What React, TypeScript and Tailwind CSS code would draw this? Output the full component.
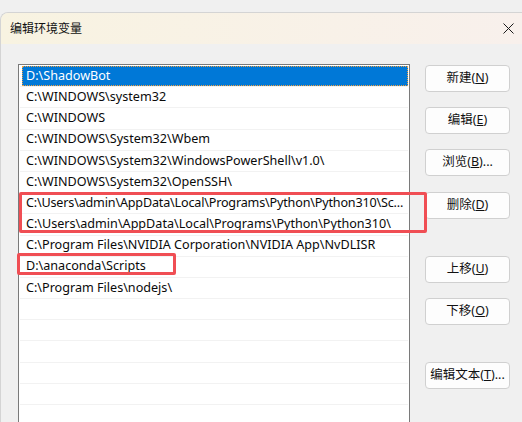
import React from "react";

const entries = [
  "D:\\ShadowBot",
  "C:\\WINDOWS\\system32",
  "C:\\WINDOWS",
  "C:\\WINDOWS\\System32\\Wbem",
  "C:\\WINDOWS\\System32\\WindowsPowerShell\\v1.0\\",
  "C:\\WINDOWS\\System32\\OpenSSH\\",
  "C:\\Users\\admin\\AppData\\Local\\Programs\\Python\\Python310\\Sc...",
  "C:\\Users\\admin\\AppData\\Local\\Programs\\Python\\Python310\\",
  "C:\\Program Files\\NVIDIA Corporation\\NVIDIA App\\NvDLISR",
  "D:\\anaconda\\Scripts",
  "C:\\Program Files\\nodejs\\",
];

const rows = [...entries, ...Array(8).fill("")];

const font = { fontFamily: "'Noto Sans', 'Noto Sans CJK SC', sans-serif" };

function Btn({ label, hot, suffix = "", className = "" }: { label: string; hot: string; suffix?: string; className?: string }) {
  return (
    <button className={`w-[85px] h-[27px] bg-[#fdfdfd] border border-[#d0d0d0] rounded-[4px] text-[12.5px] text-[#111] leading-none flex items-center justify-center ${className}`}>
      {label}(<u>{hot}</u>){suffix}
    </button>
  );
}

export default function App() {
  return (
    <div className="w-[522px] h-[422px] bg-[#f0f0f0] overflow-hidden pt-[12px] relative" style={font}>
      <div className="h-full rounded-tl-[8px] border-t border-l border-[#d4d4d4] overflow-hidden">
        <div className="h-[31px] flex items-center justify-between pl-[9px] pr-[8px] bg-gradient-to-r from-[#f8f3e1] to-[#f8f0ec]">
          <span className="text-[12px] text-[#111]">编辑环境变量</span>
          <svg width="11" height="11" viewBox="0 0 11 11">
            <path d="M0.5 0.5 L10.5 10.5 M10.5 0.5 L0.5 10.5" stroke="#1a1a1a" strokeWidth="1" />
          </svg>
        </div>
        <div className="flex pl-[17px] pt-[20px] gap-[15px]">
          <div className="w-[392px] border-l border-t border-r border-[#7a7a7a] bg-white px-[1px] pt-[1px] h-[400px]">
            {rows.map((r, i) => (
              <div key={i} className="h-[21.2px] border-b border-[#f2f2f2] flex text-[12.6px] leading-none">
                {i === 0 ? (
                  <div className="ml-[2px] flex-1 bg-[#0078d7] text-white flex items-center pl-[3px] border border-dotted border-[#f0a040]">
                    {r}
                  </div>
                ) : (
                  <div className={`flex-1 flex items-center pl-[6px] text-[#0a0a0a] whitespace-nowrap overflow-hidden ${i === 6 ? "tracking-[-0.18px]" : ""}`}>{r}</div>
                )}
              </div>
            ))}
          </div>
          <div className="flex flex-col pt-[1px]">
            <Btn label="新建" hot="N" />
            <Btn label="编辑" hot="E" className="mt-[15px]" />
            <Btn label="浏览" hot="B" suffix="..." className="mt-[15px]" />
            <Btn label="删除" hot="D" className="mt-[16px]" />
            <Btn label="上移" hot="U" className="mt-[37px]" />
            <Btn label="下移" hot="O" className="mt-[15px]" />
            <Btn label="编辑文本" hot="T" suffix="..." className="mt-[37px]" />
          </div>
        </div>
      </div>
      <div className="absolute left-[19px] top-[192px] w-[408px] h-[41px] border-[3px] border-[#f04e54] rounded-[2px] pointer-events-none" />
      <div className="absolute left-[17px] top-[253px] w-[159px] h-[22px] border-[3px] border-[#f04e54] rounded-[2px] pointer-events-none" />
    </div>
  );
}
